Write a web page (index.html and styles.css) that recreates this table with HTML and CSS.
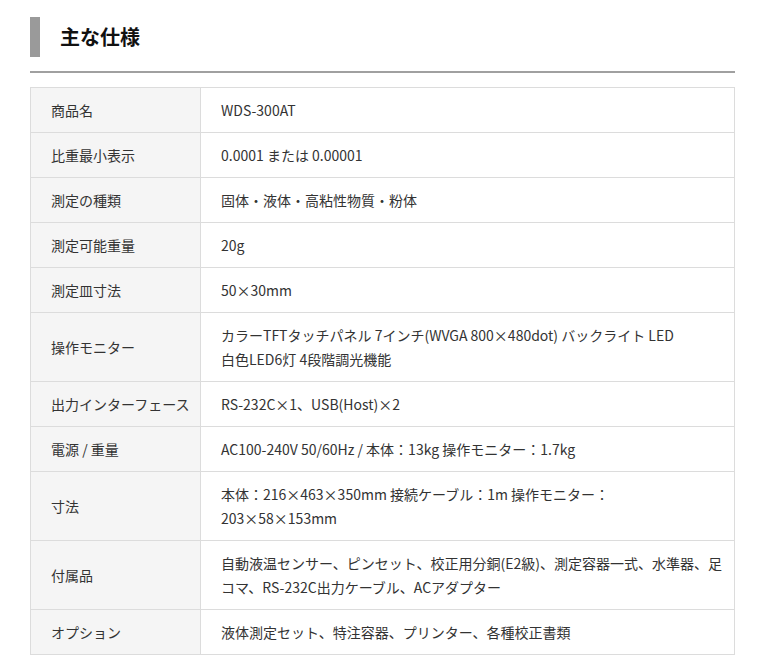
FILE: index.html
```html
<!DOCTYPE html>
<html lang="ja">
<head>
<meta charset="utf-8">
<link rel="stylesheet" href="styles.css">
</head>
<body>
<div class="wrap">
  <h2 class="title">主な仕様</h2>
  <hr class="rule">
  <table class="spec">
    <colgroup><col class="c-label"><col class="c-value"></colgroup>
    <tr><th>商品名</th><td>WDS-300AT</td></tr>
    <tr><th>比重最小表示</th><td>0.0001 または 0.00001</td></tr>
    <tr><th>測定の種類</th><td>固体・液体・高粘性物質・粉体</td></tr>
    <tr><th>測定可能重量</th><td>20g</td></tr>
    <tr><th>測定皿寸法</th><td>50×30mm</td></tr>
    <tr><th>操作モニター</th><td>カラーTFTタッチパネル 7インチ(WVGA 800×480dot) バックライト LED<br>白色LED6灯 4段階調光機能</td></tr>
    <tr><th>出力インターフェース</th><td>RS-232C×1、USB(Host)×2</td></tr>
    <tr><th>電源 / 重量</th><td>AC100-240V 50/60Hz / 本体：13kg 操作モニター：1.7kg</td></tr>
    <tr><th>寸法</th><td>本体：216×463×350mm 接続ケーブル：1m 操作モニター：<br>203×58×153mm</td></tr>
    <tr><th>付属品</th><td>自動液温センサー、ピンセット、校正用分銅(E2級)、測定容器一式、水準器、足<br>コマ、RS-232C出力ケーブル、ACアダプター</td></tr>
    <tr><th>オプション</th><td>液体測定セット、特注容器、プリンター、各種校正書類</td></tr>
  </table>
</div>
</body>
</html>
```
FILE: styles.css
```css
html, body {
  margin: 0;
  padding: 0;
  background: #fff;
}
body {
  font-family: "Noto Sans CJK JP", "Noto Sans", sans-serif;
  color: #333;
}
.wrap {
  width: 705px;
  margin-left: 30px;
  padding-top: 17px;
}
.title {
  margin: 0;
  border-left: 10px solid #9a9a9a;
  padding-left: 20px;
  height: 40px;
  line-height: 40px;
  font-size: 20px;
  font-weight: bold;
  color: #111;
}
.rule {
  margin: 14px 0 0 0;
  border: 0;
  border-top: 2px solid #a0a0a0;
  height: 0;
}
.spec {
  margin-top: 14px;
  width: 705px;
  table-layout: fixed;
  border-collapse: collapse;
  font-size: 14px;
  line-height: 24px;
}
.c-label {
  width: 170px;
}
.spec th, .spec td {
  border: 1px solid #dcdcdc;
  text-align: left;
  font-weight: normal;
  vertical-align: middle;
  white-space: nowrap;
}
.spec th {
  padding: 10px 4px 10px 20px;
  background: #f5f5f5;
}
.spec td {
  padding: 10px 8px 10px 20px;
}
```
